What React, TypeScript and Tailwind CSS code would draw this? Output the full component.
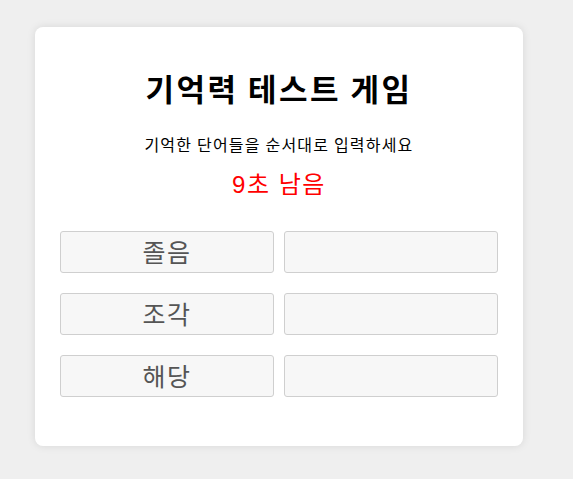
export default function App() {
  const left = ["졸음", "조각", "해당"];
  return (
    <div
      className="min-h-[479px] w-full bg-[#efefef] pt-[27px] pl-[35px]"
      style={{ fontFamily: '"Noto Sans CJK KR", "Noto Sans", sans-serif' }}
    >
      <div className="w-[488px] h-[419px] bg-white rounded-lg shadow-[0_0_8px_rgba(0,0,0,0.1)] px-[25px] pt-[41px] flex flex-col items-center">
        <h1 className="text-[31px] font-bold leading-[40px] tracking-[2.5px] text-black">기억력 테스트 게임</h1>
        <p className="mt-[26px] text-[16px] leading-[20px] tracking-[1.2px] text-black">기억한 단어들을 순서대로 입력하세요</p>
        <div className="mt-[17px] text-[24px] leading-[28px] tracking-[1.5px] text-[#ff0000] font-['Liberation_Sans','Noto_Sans_CJK_KR',sans-serif]">9초 남음</div>
        <div className="mt-[32px] w-full grid grid-cols-2 gap-x-[10px] gap-y-[20px]">
          {left.map((w) => (
            <>
              <div key={w} className="h-[42px] bg-[#f7f7f7] border border-[#cfcfcf] rounded-[3px] flex items-center justify-center text-[25px] tracking-[1.5px] text-[#555]">
                {w}
              </div>
              <div key={w + "r"} className="h-[42px] bg-[#f7f7f7] border border-[#cfcfcf] rounded-[3px]" />
            </>
          ))}
        </div>
      </div>
    </div>
  );
}
